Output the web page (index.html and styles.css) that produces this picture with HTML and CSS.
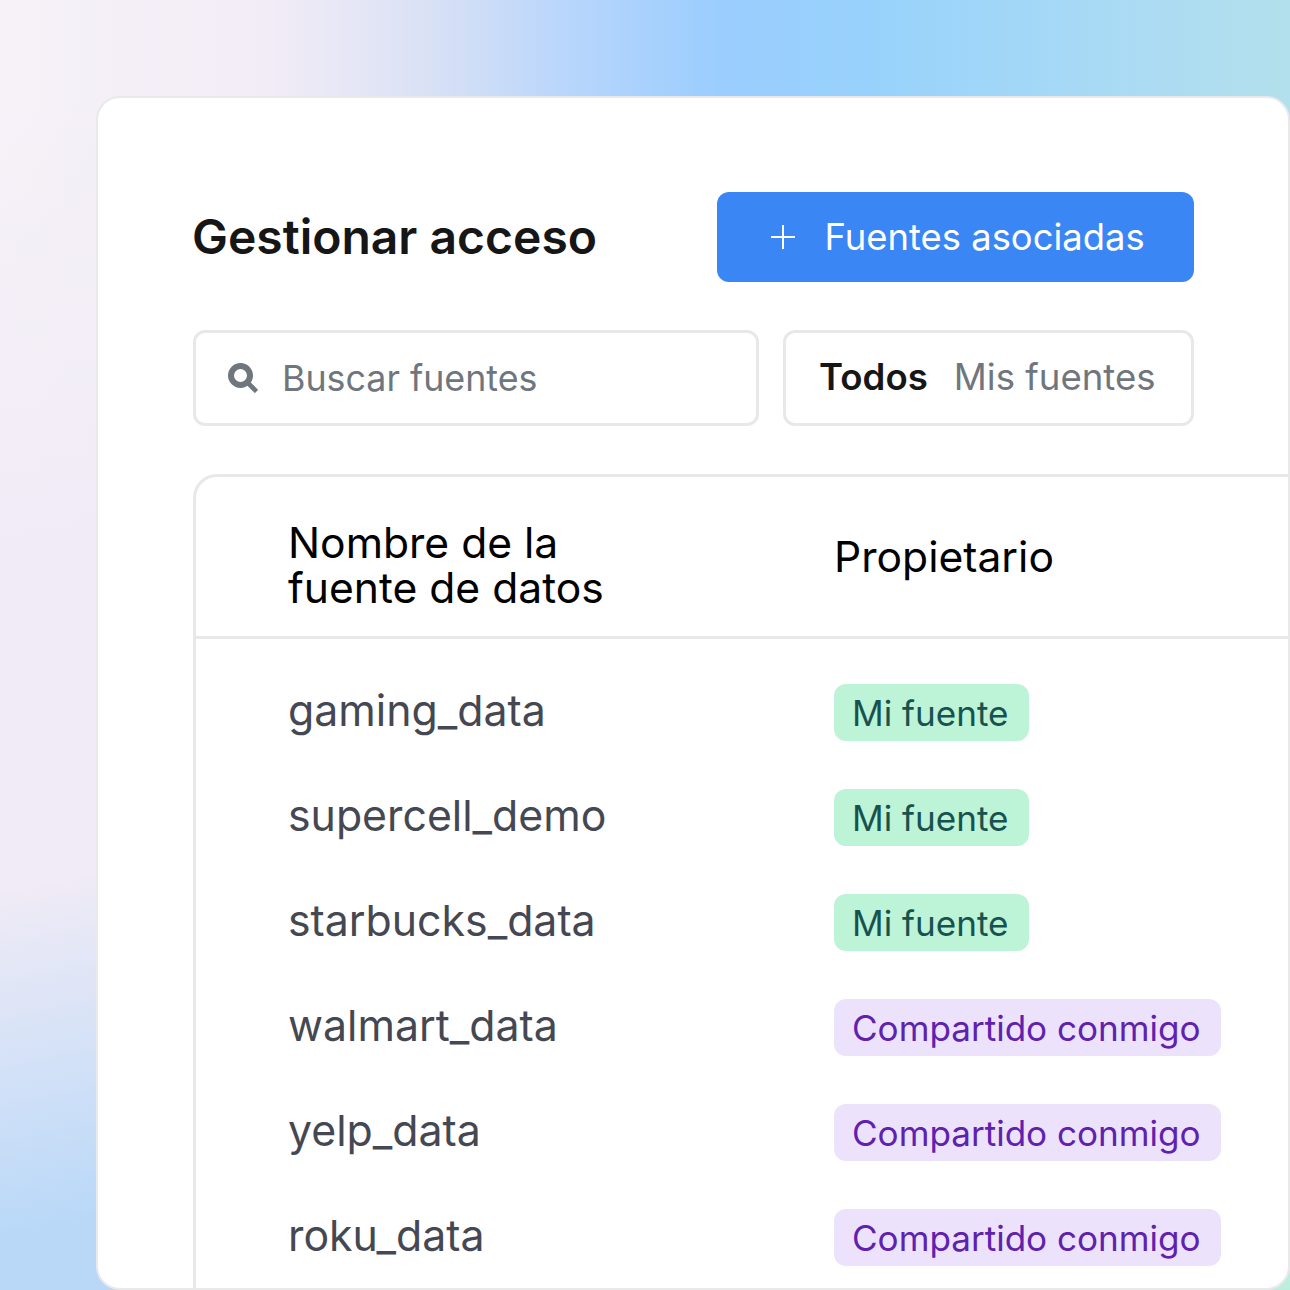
FILE: index.html
```html
<!DOCTYPE html>
<html lang="es">
<head>
<meta charset="utf-8">
<title>Gestionar acceso</title>
<link rel="stylesheet" href="styles.css">
</head>
<body>

<section class="stage">
    <div class="card">

        <div class="toolbar">
            <h1 class="title">Gestionar acceso</h1>
            <button class="add-btn" type="button">
                <svg class="add-icon" viewBox="0 0 26 26" width="26" height="26"><path d="M13 1v24M1 13h24" fill="none" stroke="#fff" stroke-width="2"/></svg>
                <span>Fuentes asociadas</span>
            </button>
        </div>

        <div class="filters">
            <div class="search">
                <svg class="search-icon" viewBox="0 0 30 30" width="30" height="30"><circle cx="12.5" cy="12.5" r="9.5" fill="none" stroke="#6f767e" stroke-width="6"/><path d="M20 20l8.5 8.5" fill="none" stroke="#6f767e" stroke-width="4.6"/></svg>
                <span class="search-text">Buscar fuentes</span>
            </div>
            <div class="tabs">
                <span class="tab tab-active">Todos</span>
                <span class="tab">Mis fuentes</span>
            </div>
        </div>

        <div class="table">
            <div class="table-head">
                <div class="col-name">Nombre de la<br>fuente de datos</div>
                <div class="col-owner">Propietario</div>
            </div>
            <div class="table-body">
                <div class="row">
                    <div class="col-name">gaming_data</div>
                    <div class="col-owner"><span class="badge badge-mine">Mi fuente</span></div>
                </div>
                <div class="row">
                    <div class="col-name">supercell_demo</div>
                    <div class="col-owner"><span class="badge badge-mine">Mi fuente</span></div>
                </div>
                <div class="row">
                    <div class="col-name">starbucks_data</div>
                    <div class="col-owner"><span class="badge badge-mine">Mi fuente</span></div>
                </div>
                <div class="row">
                    <div class="col-name">walmart_data</div>
                    <div class="col-owner"><span class="badge badge-shared">Compartido conmigo</span></div>
                </div>
                <div class="row">
                    <div class="col-name">yelp_data</div>
                    <div class="col-owner"><span class="badge badge-shared">Compartido conmigo</span></div>
                </div>
                <div class="row">
                    <div class="col-name">roku_data</div>
                    <div class="col-owner"><span class="badge badge-shared">Compartido conmigo</span></div>
                </div>
            </div>
        </div>

    </div>
</section>

</body>
</html>
```

FILE: styles.css
```css
* {
    box-sizing: border-box;
}

html, body {
    margin: 0;
    height: 100%;
}

body {
    font-family: Inter, "Liberation Sans", sans-serif;
    overflow: hidden;
}

/* Fondo con degradado */
.stage {
    width: 1290px;
    height: 1290px;
    padding: 96px 0 0 96px;
    overflow: hidden;
    background:
        radial-gradient(420px 420px at 100% 100%, #bdeedd 0%, rgba(189, 238, 221, 0) 100%),
        linear-gradient(168deg, rgba(184, 216, 248, 0) 57%, #b9d8f8 79%),
        linear-gradient(180deg, rgba(240, 235, 246, 0) 8%, #f0ebf6 45%),
        linear-gradient(90deg, #f6f2f8 0%, #f1ecf6 21%, #dae1f5 33%, #b8d6fb 44%, #9acdfe 56%, #98d2fb 68%, #abdbf4 88%, #b3e0ec 100%);
}

.card {
    width: 1194px;
    height: 1194px;
    padding: 94px 95px 0 95px;
    background: #fff;
    border: 2px solid #e9e9ec;
    border-radius: 24px;
    overflow: hidden;
}

.toolbar {
    display: flex;
    align-items: center;
    justify-content: space-between;
    width: 1001px;
}

.title {
    margin: 0 0 0 -1px;
    font-size: 48px;
    font-weight: 600;
    line-height: 90px;
    color: #161616;
}

.add-btn {
    display: flex;
    align-items: center;
    gap: 28.5px;
    width: 477px;
    height: 90px;
    padding: 0 0 0 53px;
    background: #3b86f5;
    border: 0;
    border-radius: 12px;
    font-family: inherit;
    font-size: 36.4px;
    color: #fff;
}

.filters {
    display: flex;
    gap: 24px;
    width: 1001px;
    margin-top: 48px;
}

.search, .tabs {
    display: flex;
    align-items: center;
    height: 96px;
    background: #fff;
    border: 3px solid #e8e8e8;
    border-radius: 12px;
    color: #6f767e;
}

.search {
    width: 566px;
    padding-left: 32px;
    gap: 24px;
    font-size: 35.8px;
}

.tabs {
    flex: 1;
    padding: 0 0 2px 33px;
    gap: 26px;
    font-size: 36.6px;
}

.tab-active {
    font-weight: 600;
    color: #161616;
}

.table {
    width: 1200px;
    margin-top: 48px;
    border: 3px solid #e8e8e8;
    border-right: 0;
    border-radius: 24px 0 0 0;
}

.table-head, .row {
    display: flex;
    align-items: center;
    padding-left: 92px;
}

.table-head {
    height: 162px;
    border-bottom: 3px solid #e8e8e8;
    font-size: 42.6px;
    font-weight: 400;
    line-height: 45px;
    color: #000;
}

.table-head .col-name {
    padding-top: 16px;
}

.table-body {
    padding-top: 21px;
}

.row {
    height: 105px;
    font-size: 42.8px;
    color: #454852;
}

.row .col-name {
    padding-bottom: 4px;
}

.col-name {
    width: 546px;
}

.badge {
    display: inline-block;
    height: 57px;
    padding: 0 20px 0 18px;
    border-radius: 12px;
    font-size: 35.1px;
    line-height: 59px;
}

.badge-mine {
    background: #bdf3d7;
    color: #17524e;
}

.badge-shared {
    background: #ede2fb;
    color: #5f21ae;
}
```
